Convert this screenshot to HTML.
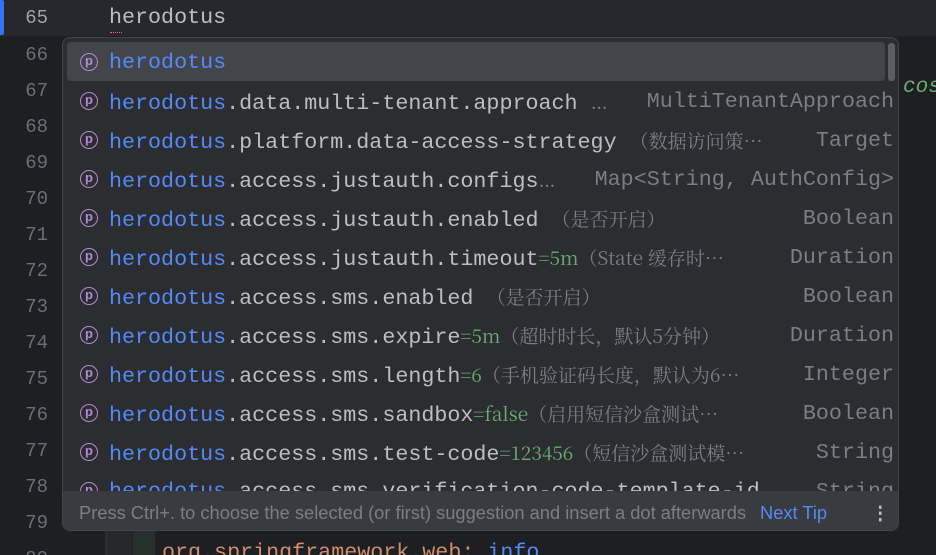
<!DOCTYPE html>
<html><head><meta charset="utf-8"><style>
html,body{margin:0;padding:0;width:936px;height:555px;overflow:hidden}
body{background:#1e1f22;position:relative;font-family:"Liberation Mono",monospace}
.ln{position:absolute;left:0;width:48px;text-align:right;color:#6a6e75;font-size:19px;line-height:36px}
.cur{position:absolute;left:0;top:0;width:936px;height:36px;background:#26282e}
.bar{position:absolute;left:0;top:0;width:4px;height:35px;background:#3574f0;border-radius:0 2px 2px 0}
.code{position:absolute;left:109px;top:0;line-height:36px;font-size:21.7px;color:#bcbec4}
.pop{position:absolute;left:62px;top:37px;width:837px;height:494px;background:#2b2d30;border:1px solid #43454a;border-radius:8px;overflow:hidden;box-sizing:border-box}
.row{position:absolute;left:0;width:835px;height:39px;line-height:39px;font-size:21.7px;color:#bcbec4;white-space:nowrap}
.sel{position:absolute;left:4px;top:4px;width:818px;height:39px;background:#43454a;border-radius:4px}
.ic{position:absolute;left:17px;top:11px;width:18px;height:18px;border:1.6px solid #b589d6;border-radius:50%;box-sizing:border-box;color:#b589d6;font:bold 13px/14px "Liberation Sans",sans-serif;text-align:center}
.t{position:absolute;left:46px;top:1px}
.b{color:#548af7}
.v{color:#6aab73;font-family:"Noto Serif CJK SC",serif;font-size:19px}
.d{color:#7a7e85;font-family:"Noto Serif CJK SC",serif;font-size:19px}
.ty{position:absolute;right:4px;top:1px;color:#7a7e85}
.foot{position:absolute;left:0;top:453px;width:835px;height:40px;background:#393b40;font-family:"Liberation Sans",sans-serif;font-size:18.3px;line-height:44px;color:#7a7e85}
.sb{position:absolute;left:825px;top:5px;width:7px;height:38px;background:#5a5d63;border-radius:3px}
</style></head><body>
<div class="cur"></div><div class="bar"></div>
<div class="ln" style="top:0;color:#a1a3ab">65</div>
<div class="ln" style="top:37px">66</div>
<div class="ln" style="top:73px">67</div>
<div class="ln" style="top:109px">68</div>
<div class="ln" style="top:145px">69</div>
<div class="ln" style="top:181px">70</div>
<div class="ln" style="top:217px">71</div>
<div class="ln" style="top:253px">72</div>
<div class="ln" style="top:289px">73</div>
<div class="ln" style="top:325px">74</div>
<div class="ln" style="top:361px">75</div>
<div class="ln" style="top:397px">76</div>
<div class="ln" style="top:433px">77</div>
<div class="ln" style="top:469px">78</div>
<div class="ln" style="top:505px">79</div>
<div class="ln" style="top:541px">80</div>
<div class="code">herodotus</div>
<div style="position:absolute;left:110px;top:30px;width:12px;height:2px;border-bottom:1.5px dotted #e06c75"></div>
<div style="position:absolute;left:903px;top:76px;font-size:21px;font-style:italic;color:#6aab73">cos</div>
<div style="position:absolute;left:105px;top:500px;width:3px;height:55px;background:#2b2d30"></div>
<div style="position:absolute;left:108px;top:500px;width:24px;height:55px;background:#25272a"></div>
<div style="position:absolute;left:133px;top:500px;width:22px;height:55px;background:#28302b"></div>
<div style="position:absolute;left:162px;top:540px;font-size:21.7px;color:#cf8e6d">org.springframework.web: <span style="color:#548af7">info</span></div>

<div class="pop">
<div class="sel"></div><div class="sb"></div>
<div class="row" style="top:4px"><div class="ic">p</div><div class="t"><span class="b">herodotus</span></div></div>
<div class="row" style="top:43px"><div class="ic">p</div><div class="t"><span class="b">herodotus</span>.data.multi-tenant.approach <span class="d">…</span></div><span class="ty">MultiTenantApproach</span></div>
<div class="row" style="top:82px"><div class="ic">p</div><div class="t"><span class="b">herodotus</span>.platform.data-access-strategy <span class="d">（数据访问策…</span></div><span class="ty">Target</span></div>
<div class="row" style="top:121px"><div class="ic">p</div><div class="t"><span class="b">herodotus</span>.access.justauth.configs<span class="d">…</span></div><span class="ty">Map&lt;String, AuthConfig&gt;</span></div>
<div class="row" style="top:160px"><div class="ic">p</div><div class="t"><span class="b">herodotus</span>.access.justauth.enabled <span class="d">（是否开启）</span></div><span class="ty">Boolean</span></div>
<div class="row" style="top:199px"><div class="ic">p</div><div class="t"><span class="b">herodotus</span>.access.justauth.timeout<span class="v">=5m</span><span class="d">（State 缓存时…</span></div><span class="ty">Duration</span></div>
<div class="row" style="top:238px"><div class="ic">p</div><div class="t"><span class="b">herodotus</span>.access.sms.enabled <span class="d">（是否开启）</span></div><span class="ty">Boolean</span></div>
<div class="row" style="top:277px"><div class="ic">p</div><div class="t"><span class="b">herodotus</span>.access.sms.expire<span class="v">=5m</span><span class="d">（超时时长，默认5分钟）</span></div><span class="ty">Duration</span></div>
<div class="row" style="top:316px"><div class="ic">p</div><div class="t"><span class="b">herodotus</span>.access.sms.length<span class="v">=6</span><span class="d">（手机验证码长度，默认为6…</span></div><span class="ty">Integer</span></div>
<div class="row" style="top:355px"><div class="ic">p</div><div class="t"><span class="b">herodotus</span>.access.sms.sandbox<span class="v">=false</span><span class="d">（启用短信沙盒测试…</span></div><span class="ty">Boolean</span></div>
<div class="row" style="top:394px"><div class="ic">p</div><div class="t"><span class="b">herodotus</span>.access.sms.test-code<span class="v">=123456</span><span class="d">（短信沙盒测试模…</span></div><span class="ty">String</span></div>
<div class="row" style="top:433px"><div class="ic">p</div><div class="t"><span class="b">herodotus</span>.access.sms.verification-code-template-id</div><span class="ty">String</span></div>
<div class="foot"><span style="position:absolute;left:16px">Press Ctrl+. to choose the selected (or first) suggestion and insert a dot afterwards</span><span style="position:absolute;left:697px;color:#548af7">Next Tip</span><span style="position:absolute;left:808px;color:#bcbec4;font-weight:bold">⋮</span></div>
</div>
</body></html>
